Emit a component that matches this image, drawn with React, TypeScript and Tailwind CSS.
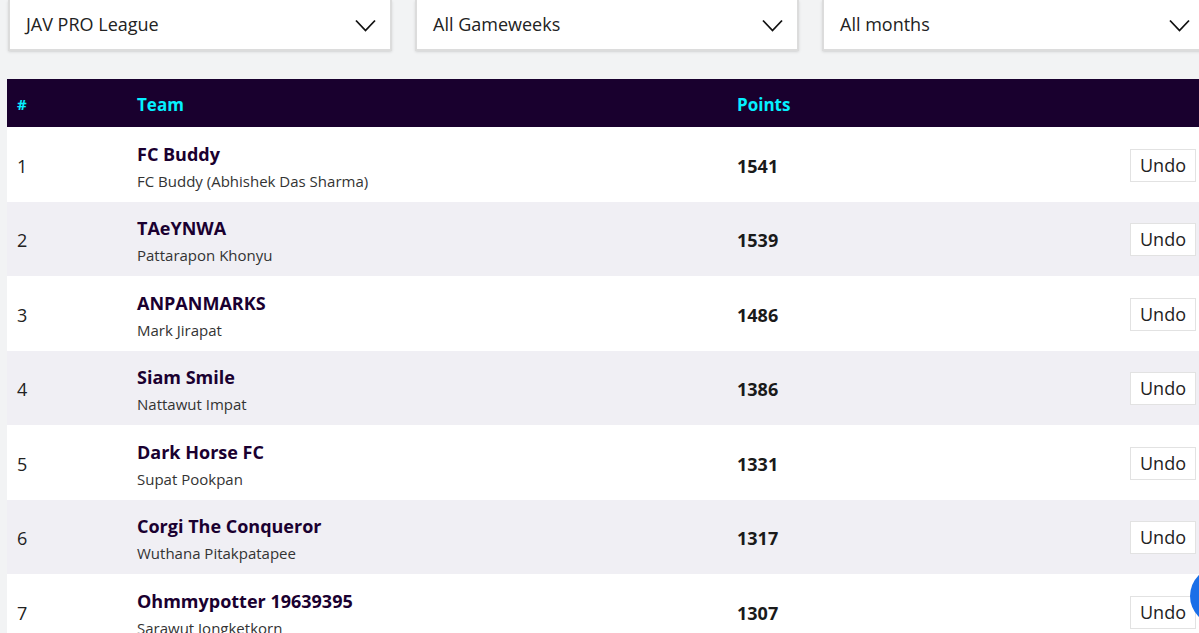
type Row = { rank: number; team: string; manager: string; points: number };

const rows: Row[] = [
    { rank: 1, team: "FC Buddy", manager: "FC Buddy (Abhishek Das Sharma)", points: 1541 },
    { rank: 2, team: "TAeYNWA", manager: "Pattarapon Khonyu", points: 1539 },
    { rank: 3, team: "ANPANMARKS", manager: "Mark Jirapat", points: 1486 },
    { rank: 4, team: "Siam Smile", manager: "Nattawut Impat", points: 1386 },
    { rank: 5, team: "Dark Horse FC", manager: "Supat Pookpan", points: 1331 },
    { rank: 6, team: "Corgi The Conqueror", manager: "Wuthana Pitakpatapee", points: 1317 },
    { rank: 7, team: "Ohmmypotter 19639395", manager: "Sarawut Jongketkorn", points: 1307 },
];

const Select = ({ label }: { label: string }) => (
    <div className="flex items-center justify-between w-[384px] shrink-0 h-[51px] pb-[1px] pl-[16px] pr-[14px] bg-white border-x-2 border-b-2 border-[#dcdcdc] shadow-sm">
        <span className="text-[18px] text-[#222]">{label}</span>
        <svg width="21" height="13" viewBox="0 0 21 13" className="mt-[3px]">
            <polyline
                points="1,1.5 10.5,11.5 20,1.5"
                fill="none"
                stroke="#111"
                strokeWidth="1.8"
            />
        </svg>
    </div>
);

const App = () => {
    return (
        <div className="relative h-[633px] w-[1199px] overflow-hidden bg-[#f2f3f4] font-['Open_Sans',sans-serif]">
            <div className="flex gap-[23px] pl-[8px]">
                <Select label="JAV PRO League" />
                <Select label="All Gameweeks" />
                <Select label="All months" />
            </div>

            <div className="mt-[28px] ml-[7px] w-[1200px]">
                <div className="flex items-center h-[48px] pt-[3px] bg-[#19002e] text-[#05f0ff] font-bold text-[17px]">
                    <span className="w-[130px] pl-[10px] text-[15px]">#</span>
                    <span className="w-[600px]">Team</span>
                    <span>Points</span>
                </div>
                {rows.map((r) => (
                    <div
                        key={r.rank}
                        className={`flex items-center h-[74.5px] pt-[4px] ${r.rank % 2 === 0 ? "bg-[#f0eff4]" : "bg-white"}`}
                    >
                        <span className="w-[130px] pl-[10px] text-[18px] text-[#222]">
                            {r.rank}
                        </span>
                        <div className="w-[600px] flex flex-col pt-[4px]">
                            <span className="text-[18px] font-bold text-[#1a0030] leading-[24px]">
                                {r.team}
                            </span>
                            <span className="mt-[2px] text-[15px] text-[#333] leading-[27px]">
                                {r.manager}
                            </span>
                        </div>
                        <span className="flex-1 text-[18px] font-bold text-[#1a1a1a]">
                            {r.points}
                        </span>
                        <button className="mr-[11px] mb-[2px] h-[33px] w-[66px] bg-white border border-[#e2e2e2] text-[18px] text-[#222]">
                            Undo
                        </button>
                    </div>
                ))}
            </div>

            <div className="absolute left-[1190px] top-[567px] h-[58px] w-[58px] rounded-full bg-[#1a6fe8]" />
        </div>
    );
};

export default App;
